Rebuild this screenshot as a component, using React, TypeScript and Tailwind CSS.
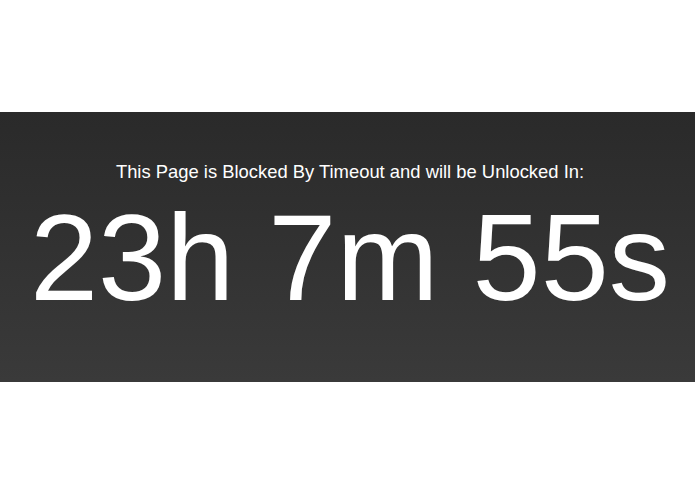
export default function App() {
  return (
    <main className="min-h-[494px] bg-white pt-[112px] font-['Liberation_Sans',Arial,sans-serif]">
      <section className="bg-linear-to-b from-[#2a2a2a] to-[#3a3a3a] pt-[50px] pb-[64px] pl-[5px] text-center text-white">
        <p className="text-[18.4px] leading-[20px]">
          This Page is Blocked By Timeout and will be Unlocked In:
        </p>
        <div className="mt-[16px] text-[122.5px] leading-[120px]">23h 7m 55s</div>
      </section>
    </main>
  );
}
